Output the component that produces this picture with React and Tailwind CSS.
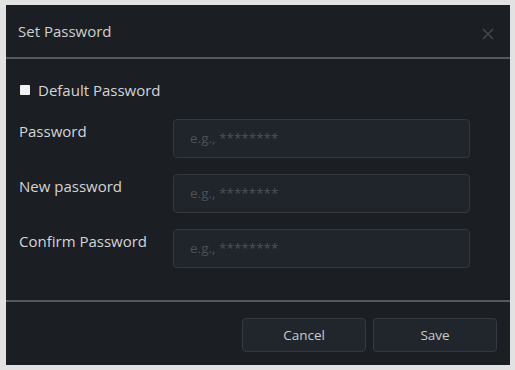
import React from "react";

const font = { fontFamily: '"Open Sans", "Noto Sans", Arial, sans-serif' };

function Field({ label }) {
  return (
    <div className="flex items-start">
      <div className="w-[154px] pt-[1px] text-[15px] text-[#d4d5d7]">{label}</div>
      <input
        type="password"
        placeholder="e.g., ********"
        className="h-[39px] w-[297px] rounded-[4px] border border-[#34383e] bg-[#20242b] px-4 text-[13.5px] text-[#d4d5d7] outline-none placeholder:text-[#4c5057]"
        style={font}
      />
    </div>
  );
}

export default function App() {
  return (
    <div className="h-[370px] w-[515px] bg-[#e2e2e2] pl-[6px] pr-[5px] pt-[5px] pb-[5px]" style={font}>
      <div className="flex h-full w-full flex-col bg-[#1b1e23]">
        <div className="flex h-[54px] items-center justify-between border-b-2 border-[#55595e] pl-[12px] pr-[16px]">
          <span className="text-[15px] text-[#cfd0d2]">Set Password</span>
          <svg width="12" height="12" viewBox="0 0 12 12" className="mt-[5px]">
            <path d="M1 1 L11 11 M11 1 L1 11" stroke="#43474d" strokeWidth="1.6" />
          </svg>
        </div>
        <div className="flex flex-1 flex-col border-b-2 border-[#55595e] pl-[13px] pt-[20px]">
          <label className="flex items-center gap-[8px] pl-[1px] text-[15px] text-[#d4d5d7]">
            <span className="h-[10px] w-[10px] rounded-[1px] bg-[#f2f2f2]" />
            Default Password
          </label>
          <div className="mt-[17px] flex flex-col gap-[16px]">
            <Field label="Password" />
            <Field label="New password" />
            <Field label="Confirm Password" />
          </div>
        </div>
        <div className="flex h-[63px] items-start justify-end gap-[7px] pr-[13px] pt-[16px]">
          <button className="h-[34px] w-[124px] rounded-[4px] border border-[#363a40] bg-[#21252c] text-[13.5px] text-[#c9cacc]">
            Cancel
          </button>
          <button className="h-[34px] w-[124px] rounded-[4px] border border-[#363a40] bg-[#21252c] text-[13.5px] text-[#c9cacc]">
            Save
          </button>
        </div>
      </div>
    </div>
  );
}
